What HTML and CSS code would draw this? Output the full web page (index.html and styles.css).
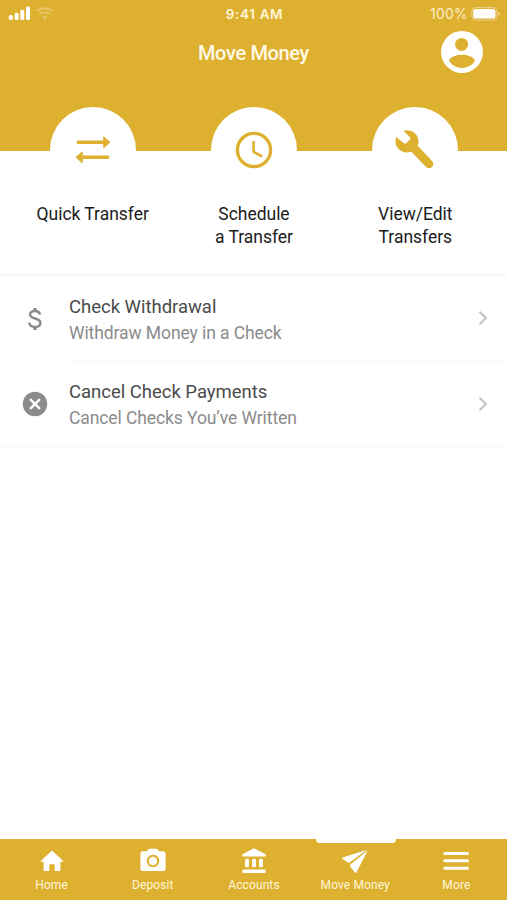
FILE: index.html
```html
<!doctype html>
<html lang="en">
  <head>
    <meta charset="utf-8" />
    <meta name="viewport" content="width=device-width, initial-scale=1" />
    <title>Move Money</title>
    <link rel="stylesheet" href="styles.css">
  </head>
  <body>
    <div class="app">
      <header class="header">
        <div class="status">
          <div class="status-left">
            <svg width="50" height="16" viewBox="0 0 50 16">
              <g fill="#fff">
                <rect x="0.8" y="10" width="4" height="5" rx="1.6"/>
                <rect x="6.6" y="7.8" width="4" height="7.2" rx="1.6"/>
                <rect x="12.3" y="4.8" width="4" height="10.2" rx="1.6"/>
                <rect x="18" y="1.6" width="4" height="13.4" rx="1.6"/>
              </g>
              <g class="wifi">
                <path d="M29 6.2a11.5 11.5 0 0 1 15.4 0"/>
                <path d="M31.8 9.2a7.2 7.2 0 0 1 9.8 0"/>
                <path class="dot" d="M36.7 15l-2.6-2.9a3.8 3.8 0 0 1 5.2 0z"/>
              </g>
            </svg>
          </div>
          <div class="time">9:41 AM</div>
          <div class="status-right">
            <span class="percent">100%</span>
            <svg width="30" height="14" viewBox="0 0 30 14">
              <rect x="0.8" y="0.5" width="25" height="12.6" rx="3.6" fill="none" stroke="#ecd08a" stroke-width="1"/>
              <rect x="2.2" y="2" width="22.2" height="9.6" rx="2.2" fill="#fff"/>
              <path d="M27.2 4.8c1.9.7 1.9 3.4 0 4z" fill="#f3dfa6"/>
            </svg>
          </div>
        </div>
        <div class="titlebar">
          <h1>Move Money</h1>
          <svg class="avatar" viewBox="2 2 20 20">
            <path fill="#fff" d="M12 2a10 10 0 1 0 0 20 10 10 0 0 0 0-20zm-.2 3.3a3.1 3.1 0 1 1 0 6.2 3.1 3.1 0 0 1 0-6.2zM12 19.600c-2.600 0-4.900-1.100-6.200-3.500.6-1.900 3.700-2.800 6.200-2.800s5.600.9 6.200 2.800c-1.300 2.400-3.600 3.500-6.200 3.500z"/>
          </svg>
        </div>
      </header>

      <section class="actions">
        <a class="action">
          <span class="circle">
            <svg width="38" height="30" viewBox="0 0 38 30" fill="#deb02f" stroke="#deb02f" stroke-linecap="round" stroke-linejoin="round">
              <path stroke-width="3.4" d="M4.200 7.300h26M7.800 22.300h26"/>
              <path stroke-width="1" d="M30 2l6 5.300-6 5.300zM8 17l-6 5.300 6 5.300z"/>
            </svg>
          </span>
          <span class="label">Quick Transfer</span>
        </a>
        <a class="action">
          <span class="circle">
            <svg width="38" height="38" viewBox="0 0 38 38" fill="none" stroke="#deb02f">
              <circle cx="19" cy="19" r="16.600" stroke-width="3.300"/>
              <path stroke-width="2.600" stroke-linecap="round" stroke-linejoin="round" d="M18.600 11v9.800l7.600 4.200"/>
            </svg>
          </span>
          <span class="label">Schedule<br>a Transfer</span>
        </a>
        <a class="action">
          <span class="circle">
            <svg width="40" height="40" viewBox="0 0 41 41">
              <path fill="#deb02f" d="M1.200 7.200c-1.500 4.300-.8 9 2.500 12.400 3.500 3.500 8.500 4.300 12.800 2.500l15.600 16a4.300 4.300 0 0 0 6.100-6L23.300 16.100c1.700-4.300.8-9.200-2.700-12.600C17.300.2 12.800-.6 8.700.9l6.300 6.300c1 1 1 1.900 0 2.900l-3.300 3.300c-1 1-1.900 1-2.900 0z"/>
            </svg>
          </span>
          <span class="label">View/Edit<br>Transfers</span>
        </a>
      </section>

      <ul class="list">
        <li class="item">
          <span class="icon">
            <svg width="16" height="24" viewBox="0 0 16 24" fill="none" stroke="#8b8b8b">
              <path stroke-width="2.400" d="M12.900 7.700C12.700 5.200 10.700 4 8 4 5.200 4 3 5.400 3 7.600c0 2.500 2.400 3.200 5.100 3.900 3 .8 5.300 1.700 5.300 4.400 0 2.600-2.400 4-5.400 4-3.200 0-5.500-1.500-5.700-4.400"/>
              <path stroke-width="3.200" d="M8 1v3M8 20v3"/>
            </svg>
          </span>
          <div class="content">
            <div class="text">
              <div class="name">Check Withdrawal</div>
              <div class="desc">Withdraw Money in a Check</div>
            </div>
            <svg class="chevron" viewBox="0 0 10 16"><path d="M1.600 1.800L7.800 8l-6.200 6.200"/></svg>
          </div>
        </li>
        <li class="item">
          <span class="icon">
            <svg width="26" height="26" viewBox="0 0 26 26">
              <circle cx="13" cy="13" r="12.200" fill="#8b8b8b"/>
              <path d="M8.800 8.800l8.400 8.400M17.200 8.800l-8.400 8.400" stroke="#fff" stroke-width="2.600" stroke-linecap="round"/>
            </svg>
          </span>
          <div class="content">
            <div class="text">
              <div class="name">Cancel Check Payments</div>
              <div class="desc">Cancel Checks You’ve Written</div>
            </div>
            <svg class="chevron" viewBox="0 0 10 16"><path d="M1.600 1.800L7.800 8l-6.200 6.200"/></svg>
          </div>
        </li>
      </ul>

      <nav class="tabs">
        <a class="tab">
          <svg width="26" height="26" viewBox="0 0 26 26"><path fill="#fff" d="M13 2.400L24 12.800c.4.400.2 1-.4 1H21.400v8.300c0 .6-.4 1-1 1h-4.700v-6.800h-5.400v6.800H5.600c-.6 0-1-.4-1-1v-8.300H2.400c-.6 0-.8-.6-.4-1z"/></svg>
          <span>Home</span>
        </a>
        <a class="tab">
          <svg width="26" height="26" viewBox="0 0 26 26">
            <path fill="#fff" d="M9 .8h8l2.200 2.400H23a2.600 2.600 0 0 1 2.600 2.600v14.600a2.600 2.600 0 0 1-2.600 2.600H3a2.600 2.600 0 0 1-2.600-2.600V5.800A2.600 2.600 0 0 1 3 3.200h3.800z"/>
            <circle cx="13" cy="13" r="5.200" fill="#fff" stroke="#deb02f" stroke-width="2"/>
          </svg>
          <span>Deposit</span>
        </a>
        <a class="tab">
          <svg width="26" height="26" viewBox="0 0 26 26" fill="#fff">
            <path d="M13 .3L24.200 6c.8.500.6 2.500-.4 2.500H2.200c-1 0-1.200-2-.4-2.500z"/>
            <rect x="4" y="10.700" width="4" height="8.600" rx="1.600"/>
            <rect x="11" y="10.700" width="4" height="8.600" rx="1.600"/>
            <rect x="18" y="10.700" width="4" height="8.600" rx="1.600"/>
            <rect x="1.400" y="21.500" width="23.200" height="3.600" rx="1.200"/>
          </svg>
          <span>Accounts</span>
        </a>
        <a class="tab active">
          <svg width="26" height="26" viewBox="0 0 26 26" fill="#fff">
            <path d="M25 1.700L.7 9.600c-.7.300-.7.900-.1 1.300l6.200 4.200z"/>
            <path d="M25.700 2.500L8.300 16.400v2.200l4.500 5.900c.6.600 1.400.5 1.700-.2z"/>
          </svg>
          <span>Move Money</span>
        </a>
        <a class="tab">
          <svg width="26" height="26" viewBox="0 0 26 26" stroke="#fff" stroke-width="3" stroke-linecap="round"><path d="M1.800 5.500h22.600M1.800 12.800h22.600M1.800 20.200h22.600"/></svg>
          <span>More</span>
        </a>
      </nav>
    </div>
  </body>
</html>
```
FILE: styles.css
```css
:root { --gold:#deb02f; --line:#f6f6f6; --grey:#8b8b8b; }
*{ box-sizing:border-box; }
body{ margin:0; background:#fff; font-family: Roboto, "Liberation Sans", sans-serif; }
svg{ display:block; flex:none; }
.app{ display:flex; flex-direction:column; height:900px; width:507px; }

.header{ height:151px; background:var(--gold); color:#fff; flex:none; }
.status{ display:grid; grid-template-columns:1fr auto 1fr; align-items:center; height:27px; padding:0 6px 0 8px; font-family: Inter, "Liberation Sans", sans-serif; }
.status-left{ padding-bottom:1px; }
.wifi path{ fill:none; stroke:#efd590; stroke-width:1.8; opacity:.6; }
.wifi .dot{ fill:#efd590; stroke:none; }
.time{ font-size:13.5px; font-weight:600; letter-spacing:.65px; color:#fff6da; }
.status-right{ display:flex; justify-content:flex-end; align-items:center; gap:3px; }
.percent{ font-size:14px; letter-spacing:.2px; color:#fbedc6; }
.titlebar{ display:grid; grid-template-columns:1fr auto 1fr; align-items:center; height:50px; padding:0 24px; }
h1{ grid-column:2; margin:0; padding-top:1px; font-size:20px; font-weight:500; letter-spacing:-.35px; color:#fff9e6; }
.avatar{ width:42px; height:42px; justify-self:end; }

.actions{ display:grid; grid-template-columns:repeat(3, 1fr); height:125px; padding:0 11px 0 12px; border-bottom:2px solid var(--line); flex:none; }
.action{ display:flex; flex-direction:column; align-items:center; }
.circle{ display:flex; align-items:center; justify-content:center; width:86px; height:86px; margin-top:-44px; border-radius:50%; background:#fff; box-shadow:0 1px 2px rgba(0,0,0,.02); }
.label{ margin-top:10px; font-size:17.5px; line-height:22.5px; letter-spacing:-.03px; text-align:center; color:#1c1c1c; }

.list{ margin:0; padding:0; list-style:none; flex:1; }
.item{ display:flex; height:85.5px; }
.icon{ display:flex; align-items:center; justify-content:center; width:69px; }
.content{ display:flex; flex:1; align-items:center; justify-content:space-between; padding-right:19px; border-bottom:1.500px solid var(--line); }
.item:last-child{ border-bottom:1px solid var(--line); }
.item:last-child .content{ border-bottom:0; }
.text{ padding-top:3px; }
.name{ font-size:18.5px; line-height:26px; letter-spacing:-.02px; color:#4b4b4b; }
.desc{ font-size:17.5px; line-height:26px; letter-spacing:-.09px; color:var(--grey); }
.chevron{ width:10px; height:16px; fill:none; stroke:#c4c4c4; stroke-width:2.2; }

.tabs{ display:grid; grid-template-columns:repeat(5, 1fr); height:61px; padding-left:1px; background:var(--gold); flex:none; }
.tab{ position:relative; display:flex; flex-direction:column; align-items:center; padding-top:9px; font-size:12px; line-height:20px; letter-spacing:.1px; color:#fff6da; }
.tab span{ margin-top:1px; }
.tab.active::before{ content:""; position:absolute; top:-1px; left:11px; width:80px; height:5px; border-radius:0 0 4px 4px; background:#fff; }
```
